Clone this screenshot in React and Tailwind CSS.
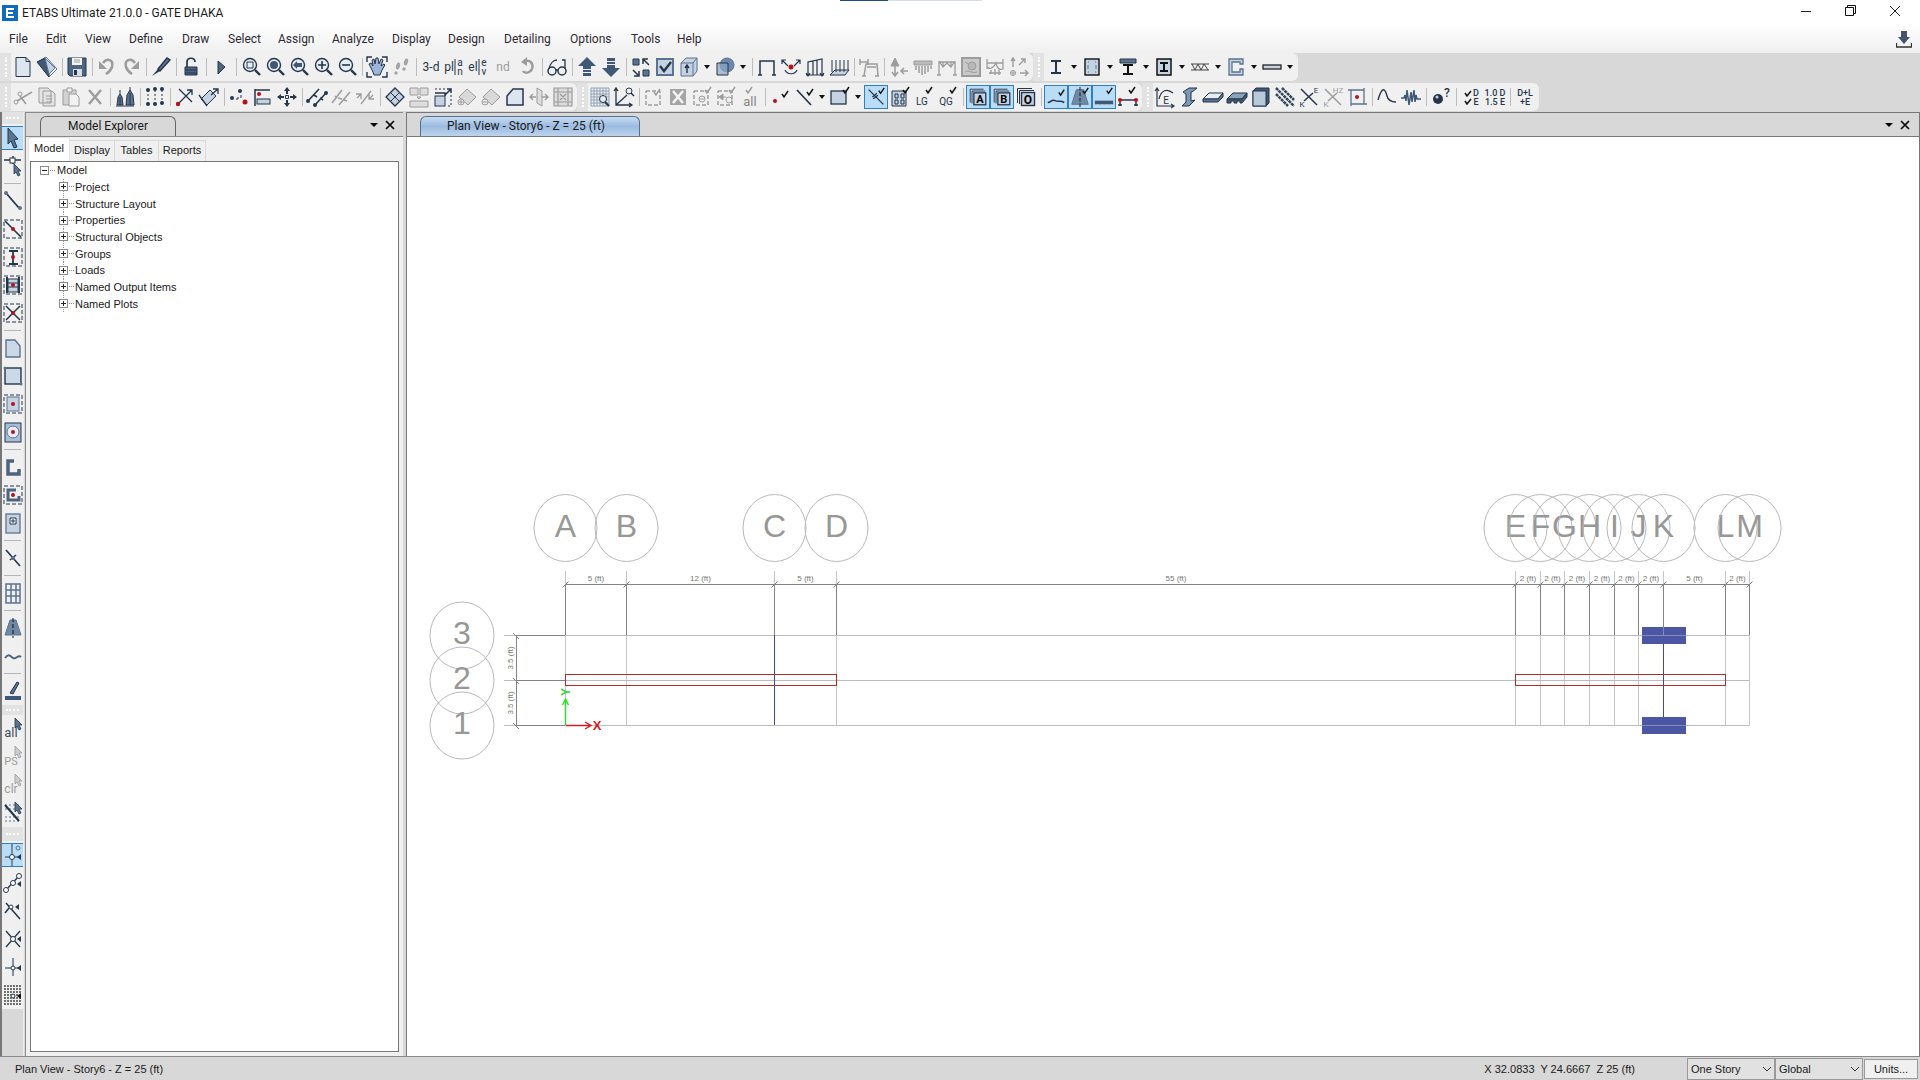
import { useState } from 'react'

const D = '#25364a'
const B = '#5b7391'
const L = '#c5d2e2'
const G = '#9c9c9c'
const R = '#b5121b'

const menus = [
  ['File', 'w-[37px]'], ['Edit', 'w-[39px]'], ['View', 'w-[44px]'], ['Define', 'w-[53px]'], ['Draw', 'w-[46px]'],
  ['Select', 'w-[50px]'], ['Assign', 'w-[54px]'], ['Analyze', 'w-[60px]'], ['Display', 'w-[56px]'], ['Design', 'w-[56px]'],
  ['Detailing', 'w-[66px]'], ['Options', 'w-[61px]'], ['Tools', 'w-[46px]'], ['Help', 'w-[40px]'],
]

// "|" is a separator, "v" a drop-down arrow, a leading "*" a pressed button
const row1 = [
  'new open | save | undo redo | pen | lock | run | zoomBox zoomAll zoomPrev zoomIn zoomOut | pan walk | view3d plan elev nd rotate | glasses | up down | shrink options cube v object v | frame jointLoad frameLoad shellLoad | deformed | reaction soil moment stress diagram more',
  'steelI v column v tee v composite v truss v channel v plate v',
]
const row2 = [
  'cut copy paste delete | towers | replicate | extrude shell3d | merge align move | divide trim extend | mesh split scale addPlate removePlate chamfer mirror opening',
  'gridSelect axes | selWindow selX selMinus selPrev selAll | showNode showLine v showArea v *snapLine showWall lg qg | *boxA *boxB boxO | *spring *tendonOn *base link',
  'hinge beam3d slab deck wall rebar ke khz center | curve wave | ball | de factors | combo',
]

const side = [
  '*select reshape | drawLine quickBrace quickColumn quickSecondary quickX | drawPoly drawRect quickFloor quickWall | wallStack quickWallStack wallOpening | drawLink | grid | tendon tendonLine | strip',
  'pickAll pickPs pickClr pickDash',
  '*snapPoint snapEnds snapPerp snapCross snapPlus snapGrid',
]

const T = ({ x = 12, y = 16, s = 11, c = D, w = 400, children }) => (
  <text x={x} y={y} fontSize={s} fill={c} fontWeight={w} textAnchor="middle" fontFamily="Roboto, sans-serif">{children}</text>
)
const Tick = ({ x = 15, y = 1, c = '#111' }) => <path d={`M${x} ${y + 4}l2 3l4-6`} stroke={c} strokeWidth="1.5" fill="none" />
const Dot = ({ x = 12, y = 12, r = 2, c = R }) => <circle cx={x} cy={y} r={r} fill={c} stroke="none" />
const Box = ({ x = 3, y = 3, w = 18, h = 18, c = D }) => <rect x={x} y={y} width={w} height={h} fill="none" stroke={c} strokeDasharray="4 2" />
const Lens = ({ children }) => (
  <>
    <circle cx="11" cy="10" r="6.5" fill="#e7edf4" stroke={D} strokeWidth="1.4" />
    <path d="M16 15l5 5" stroke={D} strokeWidth="2.4" />
    {children}
  </>
)
const Cursor = ({ x = 0, y = 0, c = B, s = D }) => <path transform={`translate(${x} ${y})`} d="M0 0l7 7h-3l2 4l-2 1l-2-4l-2 2z" fill={c} stroke={s} strokeWidth=".8" />
const Hatch = ({ x, y, w, h }) => {
  const lines = []
  for (let i = 0; i <= w; i += 3) lines.push(`M${x + i} ${y}v${h}`)
  for (let i = 0; i <= h; i += 3) lines.push(`M${x} ${y + i}h${w}`)
  return <path d={lines.join('')} stroke="#8fa1b8" />
}
const Layer = ({ children }) => (
  <>
    <path d="M3.500 18V3.500H18M5.500 19V5.500H20" stroke={D} />
    <rect x="7.500" y="7.500" width="13" height="13" fill={L} stroke={D} strokeWidth="1.400" />
    <T x={14} y={18.500} s={12} c="#000" w={700}>{children}</T>
  </>
)

const icons = {
  new: <path d="M5 2.500h10l4 4v15H5zM15 2.500v4h4" fill="#dde6f0" stroke={D} />,
  open: <><path d="M3 7l8-5l11 12l-8 8z" fill="#f3f6fa" stroke={B} /><path d="M2 7l8-4l4 14v5z" fill="#3f5876" stroke={D} /><path d="M10 3l10 10l-6 6z" fill={L} stroke={B} /></>,
  save: <><path d="M3 3h18v18H5l-2-2z" fill="#4d6480" stroke={D} /><path d="M7 3h10v7H7z" fill="#f4f4f4" /><path d="M8 14h9v7H8z" fill="#d6dde6" /><path d="M9 15h3v5H9z" fill={D} /><path d="M9 5h6M9 7h6" stroke={G} /></>,
  undo: <><path d="M8 8c4-6 11-3 9 4c-1 3-3 5-6 7" stroke={G} strokeWidth="2.500" /><path d="M4 6v8h8z" fill={G} /></>,
  redo: <><path d="M16 8c-4-6-11-3-9 4c1 3 3 5 6 7" stroke={G} strokeWidth="2.500" /><path d="M20 6v8h-8z" fill={G} /></>,
  pen: <><path d="M9 14L18 3l3 2l-10 11z" fill="#5b7391" stroke={D} strokeWidth="1.400" /><path d="M9 14l2 2l-8 5z" fill={D} /></>,
  lock: <><path d="M8 12V7c0-5 8-5 8 0" stroke={D} strokeWidth="1.700" /><path d="M6 12h12v8H6z" fill="#4d6480" stroke={D} /><path d="M6 15h12M6 18h12" stroke={D} /></>,
  run: <path d="M9 6l7 6l-7 7z" fill="#4d6480" stroke={D} />,
  zoomBox: <Lens><path d="M8 7h6v6H8z" stroke={D} /></Lens>,
  zoomAll: <Lens><Dot x={11} y={10} r={4} c="#3f5876" /></Lens>,
  zoomPrev: <Lens><path d="M6 10l4-4v2h5v4h-5v2z" fill="#3f5876" /></Lens>,
  zoomIn: <Lens><path d="M7 10h8M11 6v8" stroke={D} strokeWidth="1.600" /></Lens>,
  zoomOut: <Lens><path d="M7 10h8" stroke={D} strokeWidth="1.600" /></Lens>,
  pan: <><path d="M2 7V2h5M17 2h5v5M22 17v5h-5M7 22H2v-5" stroke={D} strokeWidth="1.400" /><path d="M6 13l-2-4l2-1l2 3L7 5l2-1l1 5l1-6h2l1 6l2-5l2 1l-2 6l3-2l1 1l-3 5l-2 5H9l-1-3z" fill="#9db5da" stroke={D} /></>,
  walk: <g fill="#a5a5a5"><ellipse cx="9" cy="11" rx="2" ry="3.500" transform="rotate(15 9 11)" /><circle cx="7" cy="18" r="1.700" /><ellipse cx="17" cy="7" rx="2" ry="3.500" transform="rotate(15 17 7)" /><circle cx="15" cy="14" r="1.700" /></g>,
  view3d: <T s={12}>3-d</T>,
  plan: <><T x={6} s={12}>pl</T><path d="M12 4v16" stroke={D} /><T x={17} y={11} s={10}>a</T><T x={17} y={20} s={10}>n</T></>,
  elev: <><T x={6} s={12}>el</T><path d="M12 4v16" stroke={D} /><T x={17} y={11} s={10}>e</T><T x={17} y={20} s={10}>v</T></>,
  nd: <T s={12} c={G}>nd</T>,
  rotate: <><path d="M10 6c8-2 10 8 4 11c-2 1-5 1-6-1" stroke={G} strokeWidth="2.500" /><path d="M6 7l6-5v9z" fill={G} /></>,
  glasses: <><circle cx="7" cy="16" r="4" stroke={D} strokeWidth="1.500" /><circle cx="17" cy="16" r="4" stroke={D} strokeWidth="1.500" /><path d="M11 15h2M4 14c1-5 4-9 8-9M20 14V5h-3" stroke={D} strokeWidth="1.300" /></>,
  up: <path d="M12 2l9 9h-5v3H8v-3H3zM8 15h8v2H8zM8 18h8v3H8z" fill="#3f5876" />,
  down: <path d="M12 22l9-9h-5v-3H8v3H3zM8 9h8V7H8zM8 6h8V3H8z" fill="#3f5876" />,
  shrink: <><path d="M4 4h6v6H4zM14 15h6v6h-6z" fill="#5b7391" stroke={D} /><path d="M20 10l-6-6m0 5V4h5M4 15l6 6m0-5v5H5" stroke={D} strokeWidth="1.500" /></>,
  options: <><rect x="4" y="4" width="16" height="16" fill={L} stroke={B} strokeWidth="2" /><path d="M7 11l4 5l7-9" stroke={D} strokeWidth="2.400" /></>,
  cube: <><path d="M4 8l5-5h11v13l-4 5H4z" fill={L} stroke={B} /><path d="M4 8h12v13M16 8l4-5" stroke={B} /><path d="M10 18v-7m-2 2l2-3l2 3" stroke={D} strokeWidth="1.400" /></>,
  object: <><circle cx="14" cy="10" r="7" fill="#6c88ae" stroke={B} /><path d="M4 8h11v12H4z" fill="#8fa6c5" fillOpacity=".7" stroke={D} /></>,
  frame: <path d="M5 20V6h14v14M3 20h4M17 20h4" stroke={D} strokeWidth="1.500" />,
  jointLoad: <><path d="M3 5l6 6M21 5l-6 6M3 9V5h4M21 9V5h-4M6 15c2 5 10 5 12 0" stroke={D} strokeWidth="1.200" /><Dot r={2.500} /></>,
  frameLoad: <path d="M3 20h18M5 20V7l14-3v16M10 6v14M14 5v15M3 18l2 3l2-3M17 18l2 3l2-3" stroke={D} strokeWidth="1.200" />,
  shellLoad: <><path d="M3 20l5-5h14l-4 5z" fill={L} stroke={D} /><path d="M5 5v12M9 5v12M13 5v12M17 5v12M21 5v10" stroke={D} /></>,
  deformed: <path d="M3 7h8M3 4v6M11 4v6M7 21l2-12h11l1 12M10 12h9M5 21h4M18 21h4" stroke={G} strokeWidth="1.500" />,
  reaction: <><path d="M8 3l4 8H4z" fill={G} stroke={G} /><path d="M8 10v10m-3-3l3 4l3-4M21 16h-7m3-3l-3 3l3 3" stroke={G} strokeWidth="1.500" /></>,
  soil: <><path d="M3 6h18v4H3z" fill="#bbb" stroke={G} /><path d="M5 11v4M8 11v7M11 11v9M14 11v8M17 11v6M20 11v3" stroke={G} strokeWidth="1.500" /></>,
  moment: <path d="M4 20V7h16v13M4 6l4 6l4-4l4 4l4-6M2 20h4M18 20h4M8 7v5M16 7v5" stroke={G} strokeWidth="1.300" />,
  stress: <><rect x="3" y="3" width="18" height="18" fill="#c9c9c9" stroke={G} strokeWidth="2" /><circle cx="13" cy="11" r="4" stroke={G} fill="#b8b8b8" /><path d="M6 17c4-3 6 2 12 0M6 7l3 2" stroke={G} /></>,
  diagram: <path d="M4 4v10M4 8h16M4 12c4 4 8-2 9-4c1 6 4 7 7 6V4M6 18h12M8 15v4M12 14v6M16 15v5" stroke={G} strokeWidth="1.300" />,
  more: <><path d="M6 12V4m-2 2l2-3l2 3M12 10l6-6m-4 0h4v4M13 18h8m-3-3l3 3l-3 3" stroke={G} strokeWidth="1.400" /><circle cx="6" cy="18" r="2.500" stroke={G} /><path d="M3 18h6M6 15v6" stroke={G} /></>,
  steelI: <path d="M7 5h10v2h-4v10h4v2H7v-2h4V7H7z" fill={D} />,
  column: <><rect x="5" y="4" width="14" height="16" fill={L} stroke="#111" strokeWidth="1.400" /><path d="M8 7h1M15 7h1M8 17h1M15 17h1M8 10v4M16 10v4" stroke={B} /></>,
  tee: <><path d="M4 4h16v4H4z" fill={B} stroke={D} /><path d="M7 9h10v2h-4v7h4v2H7v-2h4v-7H7z" fill="#111" /></>,
  composite: <><rect x="5" y="4" width="14" height="16" fill={L} stroke="#111" strokeWidth="1.500" /><path d="M8 7h8v2h-3v6h3v2H8v-2h3V9H8z" fill="#111" /></>,
  truss: <path d="M3 9h18M3 15h18M4 9l3 6l3-6l3 6l3-6l4 6" stroke="#444" />,
  channel: <path d="M5 4h14v5h-3V7H8v10h8v-3h3v6H5z" fill={L} stroke={B} strokeWidth="1.300" />,
  plate: <rect x="3" y="10" width="18" height="4" fill={L} stroke="#222" strokeWidth="1.300" />,
  cut: <><path d="M6 16L21 7M9 11l6 8" stroke={G} strokeWidth="1.600" /><circle cx="5" cy="17" r="2" stroke={G} /><circle cx="9" cy="9" r="2" stroke={G} /></>,
  copy: <path d="M4 3h9l3 3v12H4zM8 6h9l3 3v12H8zM11 11h6M11 14h6M11 17h6" fill="#e4e4e4" stroke={G} />,
  paste: <><path d="M4 5h13v15H4z" fill="#d2d2d2" stroke={G} /><path d="M8 3h5v4H8zM10 9h7l3 3v9H10z" fill="#f2f2f2" stroke={G} /></>,
  delete: <path d="M6 5l12 14M18 5L6 19" stroke={G} strokeWidth="2.400" />,
  towers: <><path d="M4 20l1-8l2-3l2 3l1 8zM13 20l1-10l3-5l3 5l1 10z" fill="#5b7391" stroke={D} /><path d="M3 21h18M7 9V5M17 5V2M7 12v8M17 8v12" stroke={D} /></>,
  replicate: <><path d="M5 5v14M12 5v14M19 5v14" stroke={D} strokeDasharray="2 2" /><Dot x={5} y={5} c={D} /><Dot x={5} y={19} c={D} /><Dot x={12} y={4} c={D} /><Dot x={12} y={19} c={D} /><Dot x={19} y={4} c={D} /><Dot x={19} y={18} c={D} /></>,
  extrude: <><path d="M6 4l13 13M6 18L19 5m-5 0h5v5" stroke={D} strokeWidth="1.300" /><Dot x={5} y={19} r={2.200} /></>,
  shell3d: <><path d="M4 14l9-9l6 6l-9 9z" fill={L} stroke={D} /><path d="M2 10l8 11M16 4h5v5M14 10l7-6" stroke={D} strokeWidth="1.300" /></>,
  merge: <><Dot x={5} y={13} c={D} /><Dot x={13} y={6} c={D} /><Dot x={18} y={17} r={2.500} /><path d="M11 12v2h-2M14 10v3" stroke={D} /></>,
  align: <><path d="M4 4v17M4 5h15" stroke={D} strokeWidth="1.500" /><rect x="6" y="14" width="13" height="5" fill={L} stroke={D} /><Dot x={8} y={9} /></>,
  move: <><path d="M12 2l3 4h-2v3h-2V6H9zM12 22l3-4h-2v-3h-2v3H9zM2 12l4-3v2h3v2H6v2zM22 12l-4-3v2h-3v2h3v2z" fill={D} /><path d="M10.500 10.500h3v3h-3z" stroke={D} /></>,
  divide: <><path d="M3 16L14 4M10 20L21 8M9 10l3 2M15 13l3 2" stroke={D} strokeWidth="1.600" /><Dot x={3} y={16} c={D} /><Dot x={21} y={8} c={D} /><Dot x={10} y={20} c={D} /></>,
  trim: <path d="M3 18L13 5M10 20L21 7M9 13l4 1M6 11l2 2M15 15l3 1" stroke={G} strokeWidth="1.500" />,
  extend: <path d="M8 19L18 6M3 9h5v5M8 9l-4 4M21 14h-5V9M16 14l4-4" stroke={G} strokeWidth="1.300" />,
  mesh: <><path d="M12 3l9 9l-9 9l-9-9z" fill={L} stroke={D} strokeWidth="1.300" /><path d="M7.500 7.500l9 9M16.500 7.500l-9 9" stroke={D} /></>,
  split: <path d="M3 3h8v7H3zM13 3h8v7h-8zM3 16h18v6H3zM10 12h4l-2 2z" fill="#ddd" stroke={G} />,
  scale: <><rect x="4" y="11" width="10" height="10" fill={L} stroke={D} /><path d="M4 8h10v3M14 10l6-6m-4 0h4v4" stroke={D} strokeWidth="1.500" /><path d="M4 4h10M20 10v11h-5" stroke={D} strokeDasharray="2 2" /></>,
  addPlate: <><path d="M4 12l8-8l9 8l-8 8z" fill="#d9d9d9" stroke={G} /><circle cx="6" cy="17" r="3" fill="#eee" stroke={G} /><path d="M4 17h4M6 15v4" stroke={G} /></>,
  removePlate: <><path d="M4 12l8-8l9 8l-8 8z" fill="#d9d9d9" stroke={G} /><circle cx="6" cy="17" r="3" fill="#eee" stroke={G} /><path d="M4 17h4" stroke={G} /></>,
  chamfer: <path d="M4 20v-9l6-7h10v16z" fill="#dde6f0" stroke={D} strokeWidth="1.500" />,
  mirror: <><path d="M10 3l5 3v15l-5-3z" fill="#ddd" stroke={G} /><path d="M9 12H3m3-3l-3 3l3 3M15 12h6m-3-3l3 3l-3 3" stroke={G} strokeWidth="1.400" /></>,
  opening: <path d="M3 3h18v18H3zM7 3v18M17 3v18M3 7h18M3 17h18M9 9l6 6M15 9l-6 6" fill="#ddd" stroke={G} strokeWidth="1.200" />,
  gridSelect: <><Hatch x={3} y={3} w={18} h={18} /><circle cx="15" cy="14" r="3.500" fill="#e7edf4" stroke={D} /><path d="M17 17l4 4" stroke={D} strokeWidth="2" /></>,
  axes: <><path d="M4 4v16h15M4 20L15 10M2 6l2-3l2 3M17 18l3 2l-3 2" stroke={D} strokeWidth="1.300" /><circle cx="17" cy="6" r="3" stroke={D} /><path d="M19 8l3 3" stroke={D} strokeWidth="1.500" /></>,
  selWindow: <><Box x={4} y={6} w={14} h={14} c="#777" /><Tick x={12} y={3} c={G} /></>,
  selX: <><rect x="4" y="4" width="16" height="16" fill="#a5a5a5" /><path d="M7 6l10 12M17 6L7 18" stroke="#f4f4f4" strokeWidth="2.500" /></>,
  selMinus: <><Box x={4} y={6} w={14} h={14} c="#777" /><Tick c={G} /><circle cx="12" cy="14" r="3" stroke={G} /><path d="M10 14h4" stroke={G} /></>,
  selPrev: <><Box x={4} y={6} w={14} h={14} c="#777" /><Tick c={G} /><path d="M5 12l4-3v6zM9 12h3" fill={G} stroke={G} /><circle cx="15" cy="15" r="3" stroke={G} /></>,
  selAll: <><T y={21} s={13} c="#888">all</T><Tick x={8} c={G} /></>,
  showNode: <><Dot x={7} y={16} /><Tick x={14} y={5} /></>,
  showLine: <><path d="M5 5l14 15" stroke={D} strokeWidth="1.700" /><Tick y={3} /></>,
  showArea: <><rect x="3" y="6" width="15" height="13" fill={L} stroke={D} strokeWidth="1.300" /><Tick /></>,
  snapLine: <><path d="M4 4l16 16M9 14l5-4M8 12l5-4" stroke={D} strokeWidth="1.400" /><Tick /></>,
  showWall: <><path d="M4 6h14v15H4zM7 9h3v4H7zM13 9h3v4h-3zM7 15h3v4H7zM13 15h3v4h-3z" fill={L} stroke={D} /><Tick /></>,
  lg: <><T x={10} y={20} s={10}>LG</T><Tick x={14} /></>,
  qg: <><T x={10} y={20} s={10}>QG</T><Tick x={14} /></>,
  boxA: <Layer>A</Layer>,
  boxB: <Layer>B</Layer>,
  boxO: <Layer>O</Layer>,
  spring: <><path d="M3 18c4 0 4-4 8-2c4 2 5-1 10 2" stroke={D} strokeWidth="1.700" /><Tick y={3} /></>,
  tendonOn: <><path d="M8 4h8l5 16H3z" fill="#6e88a6" stroke={B} /><path d="M12 1v22" stroke="#111" strokeDasharray="4 2" /><Tick /></>,
  base: <><path d="M2 16h20v4H2z" fill="#3f5876" /><path d="M5 20v2M10 20v2M15 20v2M20 20v2" stroke={L} /><Tick /></>,
  link: <><path d="M4 15h16M4 17v4M20 17v4M2 20h4M18 20h4" stroke={D} strokeWidth="1.500" /><Dot x={4} y={15} /><Dot x={20} y={15} /><Tick x={13} /></>,
  hinge: <><path d="M4 4v17h17M2 6l2-3l2 3M6 14c2-9 8-11 14-6M18 19l3 2l-3 2" stroke={D} strokeWidth="1.200" /><T x={13} y={19} s={10}>E</T></>,
  beam3d: <path d="M6 7l6-4h8l-5 4h-1v9l4-1l-6 6H5l4-4V9z" fill="#7d97b5" stroke={D} />,
  slab: <><path d="M2 14l6-6h14l-5 6z" fill="#e5ecf4" stroke={D} /><path d="M2 14h15l5-6v4l-5 5H2z" fill={B} stroke={D} /></>,
  deck: <><path d="M2 14l6-6h14l-5 6z" fill="#8ba2bd" stroke={D} /><path d="M2 14h15l5-6v4l-5 6h-2v-2h-3v2H9v-2H6v2H2z" fill="#3f5876" stroke={D} /></>,
  wall: <><path d="M4 6l3-3h13v15l-3 3H4z" fill="#3f5876" stroke={D} /><rect x="4" y="6" width="13" height="15" fill="#b9c9dc" stroke={D} /></>,
  rebar: <path d="M3 9l12 12M3 3l18 18M9 3l12 12" stroke="#34475e" strokeWidth="2.500" strokeDasharray="3 .6" />,
  ke: <><path d="M4 4l16 16M16 8l-9 8" stroke={D} strokeWidth="1.500" /><T x={19} y={8} s={8}>E</T><T x={5} y={22} s={8}>K</T></>,
  khz: <><path d="M4 4l16 16M16 8l-9 8" stroke={G} strokeWidth="1.500" /><T x={17} y={8} s={8} c={G}>HZ</T><T x={5} y={22} s={8} c={G}>K</T></>,
  center: <><path d="M6 5h13v14H6zM3 5h3M19 19h3M19 5V3M6 19v2" stroke={B} strokeWidth="1.300" /><Dot /></>,
  curve: <path d="M3 15c4-14 7-12 9-4c1 4 4 6 9 6" stroke={D} strokeWidth="1.400" />,
  wave: <path d="M2 13h3l1-3l1 6l1-11l2 15l2-13l1 10l2-12l1 12l1-7l1 4h4" stroke="#3f5876" strokeWidth="1.500" />,
  ball: <><circle cx="9" cy="14" r="5" fill={D} /><circle cx="8" cy="12" r="1.500" fill={L} /><T x={18} y={12} s={12} w={500}>?</T></>,
  de: <><T x={17} y={11} s={9} w={500}>D</T><T x={17} y={20} s={9} w={500}>E</T><path d="M6 8l2 3l4-5M6 16l2 3l4-5" stroke="#111" strokeWidth="1.500" /></>,
  factors: <><T y={11} s={9} w={500}>1.0 D</T><T y={20} s={9} w={500}>1.5 E</T></>,
  combo: <><T y={11} s={9} w={500}>D+L</T><T y={20} s={9} w={500}>+E</T></>,
  select: <path d="M7 2l10 11l-4 1l3 7l-3 1l-3-7l-3 3z" fill="#5b7391" stroke={D} />,
  reshape: <><path d="M3 6h17M12 2v8" stroke={D} strokeWidth="1.500" /><rect x="9" y="4" width="5" height="5" fill="#fff" stroke={D} /><Cursor x={13} y={10} /></>,
  drawLine: <><path d="M5 4l13 15" stroke={D} strokeWidth="1.800" /><Dot x={5} y={4} c={B} /><Dot x={19} y={19} c={B} /></>,
  quickBrace: <><Box /><path d="M4 4l16 16" stroke={D} strokeWidth="1.600" /><Dot /></>,
  quickColumn: <><Box /><path d="M8 6h9M8 19h9M12 6v13" stroke={D} strokeWidth="1.800" /><Dot /></>,
  quickSecondary: <><Box /><path d="M6 4v16M18 4v16" stroke={D} strokeWidth="2" /><path d="M7 6h10v13H7zM7 10h10M7 14h10" fill={L} stroke={D} /><Dot /></>,
  quickX: <><Box /><path d="M5 5l14 14M19 5L5 19" stroke={D} strokeWidth="1.500" /><Dot /></>,
  drawPoly: <path d="M5 4h9l5 6v11H5z" fill="#cbd8e7" stroke={B} strokeWidth="1.400" />,
  drawRect: <><rect x="4" y="4" width="16" height="16" fill="#cbd8e7" stroke={D} strokeWidth="1.400" /><Dot x={4} y={4} r={1.500} c={B} /><Dot x={20} y={20} r={1.500} c={B} /></>,
  quickFloor: <><Box /><rect x="6" y="5" width="12" height="14" fill={L} stroke={B} /><Dot /></>,
  quickWall: <><rect x="4" y="3" width="16" height="19" fill="#a9bdd6" stroke={D} /><circle cx="12" cy="12" r="6" fill="#e7edf4" stroke={B} /><Dot /></>,
  wallStack: <path d="M13 6H7v13h11v-5" stroke="#4d6480" strokeWidth="3.500" />,
  quickWallStack: <><Box /><path d="M15 7H7v10h11v-4" stroke="#4d6480" strokeWidth="3" /><Dot /></>,
  wallOpening: <><rect x="5" y="3" width="14" height="19" fill={L} stroke={B} strokeWidth="1.300" /><path d="M9 7h6v6H9zM11 9h2v2h-2z" stroke={D} fill="#fff" /></>,
  drawLink: <><path d="M5 4l14 16M9 14l6-5" stroke={D} strokeWidth="1.600" /><Dot c={B} /></>,
  grid: <path d="M5 3h14v19H5zM10 3v19M15 3v19M5 9h14M5 15h14" stroke={B} strokeWidth="1.500" />,
  tendon: <><path d="M9 4h6l5 15H4z" fill="#6e88a6" stroke={B} /><path d="M12 2v20" stroke="#111" strokeDasharray="4 2" /></>,
  tendonLine: <path d="M4 14c4-5 5-2 8 0c3 2 5-4 8-1" stroke="#4d6480" strokeWidth="2" />,
  strip: <><path d="M4 17h16v4H4z" fill="#3f5876" /><path d="M9 14l7-11l2 1l-6 11z" fill={B} stroke={D} /></>,
  pickAll: <><T x={10} y={20} s={13} c="#3f4f63">all</T><Cursor x={14} y={1} /></>,
  pickPs: <><T x={10} y={20} s={11} c={G}>PS</T><Cursor x={14} y={1} c="#ccc" s={G} /></>,
  pickClr: <><T x={10} y={20} s={12} c={G}>clr</T><Cursor x={14} y={1} c="#ccc" s={G} /></>,
  pickDash: <><path d="M4 4h14M4 8h14M4 16h14M4 20h14" stroke={B} strokeDasharray="2 2" /><path d="M4 4l14 16" stroke={D} strokeWidth="2" /><Cursor x={14} y={1} /></>,
  snapPoint: <><path d="M11 1v22M4 14h14" stroke={B} strokeWidth="1.500" /><circle cx="11" cy="14" r="2.500" fill="#fff" stroke={D} /><circle cx="17" cy="5" r="2" stroke={B} /><path d="M20 11v6l-4-3z" fill={D} /></>,
  snapEnds: <><path d="M5 19L18 5" stroke={D} strokeWidth="1.300" /><circle cx="5" cy="19" r="2.500" fill="#fff" stroke={D} /><circle cx="12" cy="12" r="2.500" fill="#fff" stroke={D} /><circle cx="18" cy="5" r="2.500" fill="#fff" stroke={D} /><path d="M20 10v6l-4-3z" fill={D} /></>,
  snapPerp: <><path d="M5 4l14 16M8 9L4 14" stroke={D} strokeWidth="1.500" /><circle cx="10" cy="8" r="2" fill="#fff" stroke={D} /><path d="M18 5v6l-4-3z" fill={D} /></>,
  snapCross: <><path d="M5 4l14 16M19 4L5 20" stroke={D} strokeWidth="1.300" /><circle cx="12" cy="12" r="2.500" fill="#fff" stroke={D} /><path d="M20 9v6l-4-3z" fill={D} /></>,
  snapPlus: <><path d="M12 3v18M4 13h15" stroke={B} strokeWidth="1.500" /><circle cx="12" cy="13" r="2" fill="#fff" stroke={D} /><path d="M20 10v6l-4-3z" fill={D} /></>,
  snapGrid: <><path d="M4 2v20M7 2v20M10 2v20M13 2v20M16 2v20M19 2v20" stroke="#444" strokeWidth="1.500" strokeDasharray="2 1" /><circle cx="12" cy="13" r="2" fill="#fff" stroke={D} /><path d="M20 10v6l-4-3z" fill="#111" /></>,
}

function Icon({ name, className = 'w-full h-full' }) {
  return (
    <svg viewBox="0 0 24 24" className={className} fill="none" aria-hidden="true">
      {icons[name]}
    </svg>
  )
}

function Grip() {
  return (
    <div className="w-[11px] h-full shrink-0 bg-[#e2e2e2] flex justify-center py-1">
      <div className="border-l-2 border-dotted border-white" />
    </div>
  )
}

function Toolbar({ items }) {
  return (
    <div className="flex items-center h-7 bg-[#f0f0f0] rounded-r-md pr-[2px]">
      <Grip />
      {items.split(' ').map((item, i) => {
        if (item === '|') return <div key={i} className="w-[6px] flex justify-center"><div className="h-[18px] border-l border-[#bcbcbc]" /></div>
        if (item === 'v') {
          return (
            <button key={i} aria-label="More" className="w-3 h-6 flex items-center justify-center">
              <svg viewBox="0 0 6 4" className="w-[6px] h-1"><path d="M0 0h6l-3 4z" fill="#111" /></svg>
            </button>
          )
        }
        const on = item[0] === '*'
        const name = on ? item.slice(1) : item
        return (
          <button key={i} aria-label={name} className={on ? 'w-6 h-6 bg-[#b9dcf7] border border-[#2f7fc1]' : 'w-6 h-6'}>
            <Icon name={name} />
          </button>
        )
      })}
    </div>
  )
}

function SideTools({ items }) {
  return (
    <div className="flex flex-col">
      {items.split(' ').map((item, i) => {
        if (item === '|') return <div key={i} className="h-[7px] flex items-center px-[2px]"><div className="w-full border-t border-[#b5b5b5]" /></div>
        const on = item[0] === '*'
        const name = on ? item.slice(1) : item
        return (
          <button key={i} aria-label={name} className={'h-6 my-[2px] flex items-center justify-center ' + (on ? 'bg-[#b9dcf7] border-y border-[#2f7fc1]' : '')}>
            <Icon name={name} className="w-6 h-6 shrink-0" />
          </button>
        )
      })}
    </div>
  )
}

function SideGrip({ className }) {
  return (
    <div className={'bg-[#e2e2e2] flex items-center px-1 ' + className}>
      <div className="w-full border-t-2 border-dotted border-white" />
    </div>
  )
}

function PanelButtons() {
  return (
    <div className="ml-auto flex items-center gap-[6px] self-center">
      <button aria-label="Window position" className="w-[10px] h-4 flex items-center justify-center">
        <svg viewBox="0 0 8 4" className="w-2 h-1"><path d="M0 0h8l-4 4z" fill="#000" /></svg>
      </button>
      <button aria-label="Close" className="w-[10px] h-4 flex items-center">
        <svg viewBox="0 0 10 10" className="w-[10px] h-[10px]"><path d="M1 1l8 8M9 1l-8 8" stroke="#000" strokeWidth="1.700" /></svg>
      </button>
    </div>
  )
}

const tabs = [['Model', 'w-[42px]'], ['Display', 'w-[45px]'], ['Tables', 'w-[44px]'], ['Reports', 'w-[47px]']]
const tree = ['Project', 'Structure Layout', 'Properties', 'Structural Objects', 'Groups', 'Loads', 'Named Output Items', 'Named Plots']

function Expander({ open }) {
  return (
    <svg viewBox="0 0 15 9" className="w-[15px] h-[9px] shrink-0" fill="none">
      <rect x=".5" y=".5" width="8" height="8" fill="#fff" stroke="#8a8a8a" />
      <path d={open ? 'M2 4.500h5' : 'M2 4.500h5M4.500 2v5'} stroke="#223" />
      <path d="M10 4.500h5" stroke="#888" strokeDasharray="1 1" />
    </svg>
  )
}

function ModelExplorer() {
  const [tab, setTab] = useState('Model')
  return (
    <aside className="w-[378px] shrink-0 flex flex-col bg-[#f0f0f0] border-l border-t border-[#8a8a8a]">
      <div className="h-6 flex items-end bg-[#d8d8d8] border-b border-[#8a8a8a] pl-[14px] pr-2">
        <div className="w-[136px] h-5 border border-b-0 border-[#666] rounded-t-md text-center text-[12px] leading-[18px] font-[Roboto,sans-serif]">Model Explorer</div>
        <PanelButtons />
      </div>
      <div className="h-6 flex items-end pl-[2px]" role="tablist">
        {tabs.map(([t, w]) => (
          <button
            key={t}
            role="tab"
            aria-selected={t === tab}
            onClick={() => setTab(t)}
            className={(t === tab ? 'h-6 pb-1 bg-white border-x border-t border-[#e2e2e2] ' : 'h-[21px] pb-[2px] border-r border-t border-[#d8d8d8] ') + w}
          >
            {t}
          </button>
        ))}
      </div>
      <div className="flex-1 ml-1 mr-1 mb-1 bg-white border border-[#777]">
        <ul className="grid grid-cols-1 auto-rows-fr h-[150px]">
          <li className="flex items-center pl-[9px] gap-[2px]"><Expander open />Model</li>
          {tree.map((t) => (
            <li key={t} className="flex items-center pl-7 gap-[1px]">
              <span className="h-full flex items-center bg-[linear-gradient(#999_50%,transparent_50%)] bg-[length:1px_2px] bg-[position:4px_0] bg-repeat-y"><Expander /></span>
              {t}
            </li>
          ))}
        </ul>
      </div>
    </aside>
  )
}

// plan geometry: grid ordinates in feet, 12.34 px per foot
const cols = [['A', 0], ['B', 5], ['C', 17], ['D', 22], ['E', 77], ['F', 79], ['G', 81], ['H', 83], ['I', 85], ['J', 87], ['K', 89], ['L', 94], ['M', 96]]
const rows = [['3', 635], ['2', 680], ['1', 725]]
const px = (ft) => Math.floor(565.2 + ft * 12.34) + 0.5

function PlanView() {
  return (
    <svg viewBox="407 137 1512 919" preserveAspectRatio="xMinYMin meet" className="w-full h-full" fill="none" fontFamily="Liberation Sans, sans-serif">
      {cols.map(([name, ft], i) => (
        <g key={name}>
          <ellipse cx={px(ft)} cy="528" rx="31.500" ry="33.500" stroke="#b9b9b9" />
          <text x={px(ft)} y="537" fontSize="32" fill="#979797" textAnchor="middle">{name}</text>
          <path d={`M${px(ft)} 571V584M${px(ft)} 635V725`} stroke="#c6c6c6" />
          <path d={`M${px(ft)} 584V635M${px(ft) - 3} 587.500l6-6`} stroke="#848484" />
          {i > 0 && (
            <text x={(px(ft) + px(cols[i - 1][1])) / 2} y="581" fontSize="8" fill="#777" textAnchor="middle">{ft - cols[i - 1][1]} (ft)</text>
          )}
        </g>
      ))}
      <path d={`M${px(0)} 584.500H${px(96)}`} stroke="#848484" />
      {rows.map(([name, y]) => (
        <g key={name}>
          <ellipse cx="462" cy={y + 0.5} rx="32" ry="33.500" stroke="#b9b9b9" />
          <text x="462" y={y + 9} fontSize="32" fill="#979797" textAnchor="middle">{name}</text>
          <path d={`M504 ${y + 0.5}H${px(96)}`} stroke="#bcbcbc" />
          <path d={`M516 ${y + 0.5}H565M513 ${y - 2}l6 6`} stroke="#848484" />
        </g>
      ))}
      <path d="M516.500 635V725" stroke="#848484" />
      {[658, 703].map((y) => (
        <text key={y} x="513" y={y} fontSize="8" fill="#777" textAnchor="middle" transform={`rotate(-90 513 ${y})`}>3.5 (ft)</text>
      ))}
      <rect x={px(0)} y="674.500" width={px(22) - px(0)} height="11" stroke="#b02a2e" />
      <rect x={px(77)} y="674.500" width={px(94) - px(77)} height="11" stroke="#b02a2e" />
      <path d={`M${px(17)} 635V725M${px(89)} 643V717`} stroke="#45489a" />
      <path d="M1642 627h44v17h-44zM1642 717h44v17h-44z" fill="#4b57a3" />
      <path d={`M1642 635.500h44M1642 725.500h44M${px(89)} 627v8`} stroke="#8289bb" />
      <path d="M565.500 725V699M562.500 705l3-6l3 6" stroke="#22e022" strokeWidth="1.400" />
      <text x="570" y="692" fontSize="12" fontWeight="700" fill="#22e022" textAnchor="middle" transform="rotate(-90 570 692)">Y</text>
      <path d="M566 725.500H591M585 722l6 3.500l-6 3.500" stroke="#d01c22" strokeWidth="1.400" />
      <text x="597" y="730" fontSize="13" fontWeight="700" fill="#d01c22" textAnchor="middle">X</text>
    </svg>
  )
}

export default function App() {
  return (
    <div className="h-screen flex flex-col bg-[#d8d8d8] font-['Liberation_Sans',sans-serif] text-[11px] leading-4 text-[#1a1a1a] overflow-hidden">
      <header className="relative h-[25px] bg-white flex items-center pl-[2px] text-[12px] font-[Roboto,sans-serif]">
        <div className="absolute top-0 left-[840px] w-[142px] h-[1px] flex">
          <div className="w-12 bg-[#1c4f8c]" />
          <div className="flex-1 bg-[#d5dde6]" />
        </div>
        <svg viewBox="0 0 16 16" className="w-4 h-4 mr-1"><path d="M0 0h16v16H0z" fill="#0f6cbd" /><path d="M12 4H5v8h7M5 8h6" stroke="#fff" strokeWidth="2" fill="none" /></svg>
        <h1>ETABS Ultimate 21.0.0 - GATE DHAKA</h1>
        <div className="ml-auto flex items-center gap-[34px] pr-5 pb-1">
          <button aria-label="Minimize" className="w-[10px] h-4"><svg viewBox="0 0 10 10" className="w-[10px] h-[10px]"><path d="M0 5.500h10" stroke="#222" /></svg></button>
          <button aria-label="Restore" className="w-[11px] h-4"><svg viewBox="0 0 11 11" className="w-[11px] h-[11px]"><path d="M.5 2.500h8v8h-8zM2.500 2.500v-2h8v8h-2" stroke="#111" fill="none" /></svg></button>
          <button aria-label="Close" className="w-[10px] h-4"><svg viewBox="0 0 10 10" className="w-[10px] h-[10px]"><path d="M0 0l10 10M10 0L0 10" stroke="#222" /></svg></button>
        </div>
      </header>

      <nav className="h-7 flex items-center bg-linear-to-b from-white to-[#efefef] pl-[9px] text-[12px] font-[Roboto,sans-serif] text-[#2e2a33]">
        {menus.map(([name, w]) => (
          <button key={name} className={'text-left shrink-0 ' + w}>{name}</button>
        ))}
        <button aria-label="Download" className="ml-auto mr-2 w-4 h-[17px]">
          <svg viewBox="0 0 16 17" fill="none" className="w-4 h-[17px]"><path d="M5 0h6v6h3l-6 7l-6-7h3z" fill="#44546e" /><path d="M.5 12v4h15v-4" stroke="#333" strokeWidth="1.300" /></svg>
        </button>
      </nav>

      <div className="flex flex-col gap-[2px] pb-[1px]">
        <div className="flex">{row1.map((r) => <Toolbar key={r} items={r} />)}</div>
        <div className="flex">{row2.map((r) => <Toolbar key={r} items={r} />)}</div>
      </div>

      <main className="flex-1 min-h-0 flex">
        <div className="w-6 shrink-0 mr-[1px] border-l-2 border-[#777] border-r border-r-[#ececec]">
          <div className="bg-[#f0f0f0]">
            <SideGrip className="h-3" />
            <SideTools items={side[0]} />
            <SideGrip className="h-[10px]" />
            <SideTools items={side[1]} />
            <SideGrip className="h-[14px]" />
            <SideTools items={side[2]} />
          </div>
        </div>
        <ModelExplorer />
        <section className="flex-1 min-w-0 ml-[3px] flex flex-col bg-white border-x border-t border-[#777]">
          <div className="h-6 shrink-0 flex items-end bg-[#d8d8d8] border-b border-[#777] pl-[13px] pr-[9px]">
            <div className="w-[220px] h-5 pr-2 border border-b-0 border-[#56708f] rounded-t-md bg-linear-to-b from-[#c6dbf1] via-[#9cbbe0] to-[#bcd4ee] text-center text-[12px] leading-[18px] font-[Roboto,sans-serif]">Plan View - Story6 - Z = 25 (ft)</div>
            <PanelButtons />
          </div>
          <div className="flex-1 min-h-0">
            <PlanView />
          </div>
        </section>
      </main>

      <footer className="h-6 shrink-0 flex items-center pl-[15px] pr-[2px] border-t border-[#8a8a8a]">
        <span>Plan View - Story6 - Z = 25 (ft)</span>
        <span className="ml-auto mr-[52px] whitespace-pre">X 32.0833  Y 24.6667  Z 25 (ft)</span>
        <div className="relative">
          <select aria-label="Stories" className="appearance-none w-[88px] h-[22px] pl-[3px] bg-[#e1e1e1] border border-[#999]"><option>One Story</option><option>All Stories</option></select>
          <svg viewBox="0 0 8 5" className="absolute right-1 top-[9px] w-2 h-[5px]"><path d="M0 0l4 4l4-4" stroke="#333" fill="none" /></svg>
        </div>
        <div className="relative">
          <select aria-label="Coordinate system" className="appearance-none w-[88px] h-[22px] pl-[3px] bg-[#e1e1e1] border border-[#999]"><option>Global</option></select>
          <svg viewBox="0 0 8 5" className="absolute right-1 top-[9px] w-2 h-[5px]"><path d="M0 0l4 4l4-4" stroke="#333" fill="none" /></svg>
        </div>
        <button className="ml-[1px] w-[54px] h-[20px] bg-[#f0f0f0] border border-[#999]">Units...</button>
      </footer>
    </div>
  )
}
